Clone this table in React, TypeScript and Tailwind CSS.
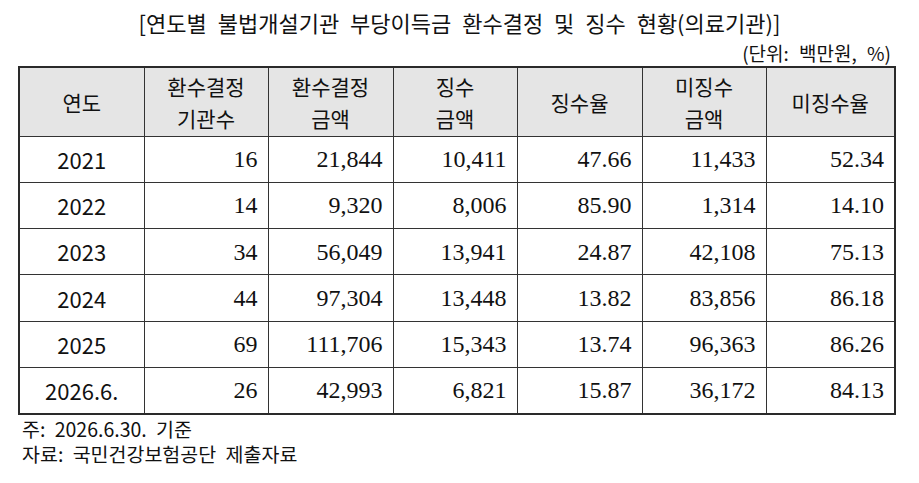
import React from "react";

const rows: [string, string, string, string, string, string, string][] = [
  ["2021", "16", "21,844", "10,411", "47.66", "11,433", "52.34"],
  ["2022", "14", "9,320", "8,006", "85.90", "1,314", "14.10"],
  ["2023", "34", "56,049", "13,941", "24.87", "42,108", "75.13"],
  ["2024", "44", "97,304", "13,448", "13.82", "83,856", "86.18"],
  ["2025", "69", "111,706", "15,343", "13.74", "96,363", "86.26"],
  ["2026.6.", "26", "42,993", "6,821", "15.87", "36,172", "84.13"],
];

const sans = "font-['Noto_Sans_CJK_KR','Noto_Sans',sans-serif]";

export default function App() {
  return (
    <div className={`w-[919px] h-[483px] bg-white text-[#111] ${sans}`}>
      <div className="pt-[8px] h-[40px] text-center text-[22px] leading-[28px] [word-spacing:6px]">
        [연도별 불법개설기관 부당이득금 환수결정 및 징수 현황(의료기관)]
      </div>
      <div className="h-[26px] pr-[28px] text-right text-[19px] leading-[26px] [word-spacing:6px]">
        (단위: 백만원, %)
      </div>
      <table className="ml-[18px] w-[876px] table-fixed border-collapse border-2 border-[#2a2a2a]">
        <colgroup>
          <col className="w-[125px]" />
          <col className="w-[124px]" />
          <col className="w-[125px]" />
          <col className="w-[124px]" />
          <col className="w-[125px]" />
          <col className="w-[124px]" />
          <col className="w-[129px]" />
        </colgroup>
        <thead>
          <tr className="h-[69px] bg-[#e5e5e5] text-[21px] leading-[32px]">
            <th className="border border-[#333] font-normal">연도</th>
            <th className="border border-[#333] font-normal">
              환수결정
              <br />
              기관수
            </th>
            <th className="border border-[#333] font-normal">
              환수결정
              <br />
              금액
            </th>
            <th className="border border-[#333] font-normal">
              징수
              <br />
              금액
            </th>
            <th className="border border-[#333] font-normal">징수율</th>
            <th className="border border-[#333] font-normal">
              미징수
              <br />
              금액
            </th>
            <th className="border border-[#333] font-normal">미징수율</th>
          </tr>
        </thead>
        <tbody>
          {rows.map((r) => (
            <tr key={r[0]} className="h-[46.3px]">
              <td className="border border-[#333] text-center text-[22px]">{r[0]}</td>
              {r.slice(1).map((v, i) => (
                <td
                  key={i}
                  className="border border-[#333] pr-[10px] text-right font-['Liberation_Serif',serif] text-[24px]"
                >
                  {v}
                </td>
              ))}
            </tr>
          ))}
        </tbody>
      </table>
      <div className="pl-[22px] pt-[1px] text-[19.5px] leading-[25px] [word-spacing:5px]">
        <div>주: 2026.6.30. 기준</div>
        <div>자료: 국민건강보험공단 제출자료</div>
      </div>
    </div>
  );
}
